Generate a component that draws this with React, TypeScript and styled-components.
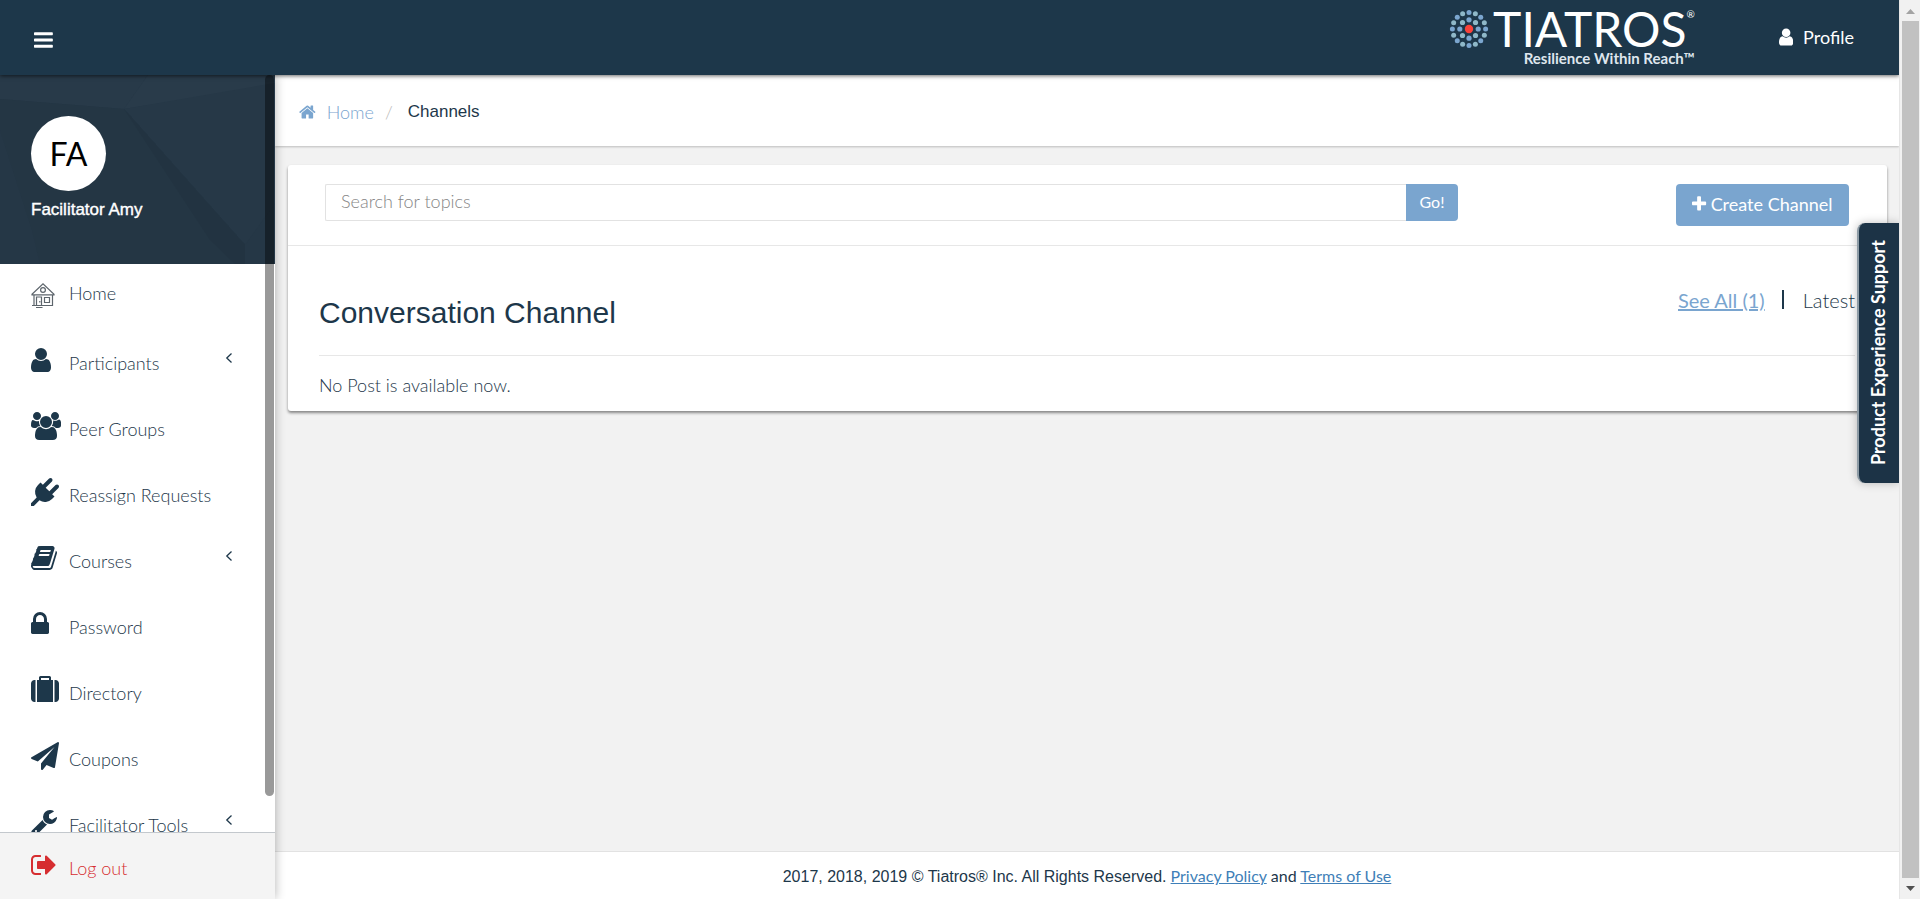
import React from "react";
import styled, { createGlobalStyle } from "styled-components";

const navy = "#1d374a";
const blue = "#7aa5cf";
const sans = `Lato, "Liberation Sans", sans-serif`;
const arial = `"Liberation Sans", Arial, sans-serif`;

const GlobalStyle = createGlobalStyle`
  * { box-sizing: border-box; }
  body { margin: 0; background: #f2f2f2; color: ${navy}; font-family: ${sans}; font-size: 18px; font-weight: 300; line-height: 24px; }
  button, input { font: inherit; }
`;

const Page = styled.div`
  display: flex;
  height: 100vh;
`;

const Site = styled.div`
  position: relative;
  flex: 1;
  min-width: 0;
  display: flex;
  flex-direction: column;
`;

const Header = styled.header`
  position: relative;
  z-index: 3;
  flex: none;
  height: 75px;
  padding: 0 45px 0 34px;
  display: flex;
  align-items: center;
  background: ${navy};
  box-shadow: 0 1px 4px rgba(0, 0, 0, 0.6);
`;

const MenuButton = styled.button`
  display: flex;
  margin: 4px auto 0 0;
  padding: 0;
  border: 0;
  background: none;
  color: #fff;
  cursor: pointer;
`;

const Logo = styled.a`
  display: flex;
  gap: 4px;
  align-self: flex-start;
  margin: 8px 84px 0 0;
  color: #fff;
  text-decoration: none;
`;

const LogoText = styled.span`
  display: flex;
  flex-direction: column;
  align-items: flex-end;
`;

const LogoName = styled.span`
  display: flex;
  align-items: flex-start;
  font-size: 48px;
  font-weight: 400;
  line-height: 42px;
`;

const Registered = styled.sup`
  font-size: 10px;
  line-height: 12px;
`;

const Tagline = styled.span`
  font-size: 15px;
  font-weight: 700;
  line-height: 16px;
  color: #dfe6ee;
  white-space: nowrap;
`;

const ProfileLink = styled.a`
  display: flex;
  align-items: center;
  gap: 10px;
  padding-bottom: 2px;
  color: #fff;
  font-weight: 400;
  text-decoration: none;
`;

const Body = styled.div`
  flex: 1;
  min-height: 0;
  display: flex;
`;

const Sidebar = styled.aside`
  position: relative;
  z-index: 2;
  flex: none;
  width: 275px;
  display: flex;
  flex-direction: column;
  background: #fff;
  box-shadow: 0 0 10px rgba(0, 0, 0, 0.3);
`;

const UserPanel = styled.section`
  position: relative;
  flex: none;
  height: 189px;
  padding: 41px 31px 0;
  background: #253746;
  color: #fff;
`;

const Facets = styled.svg`
  position: absolute;
  inset: 0;
  width: 100%;
  height: 100%;
`;

const Avatar = styled.div`
  position: relative;
  width: 75px;
  height: 75px;
  display: flex;
  align-items: center;
  justify-content: center;
  border-radius: 50%;
  background: #fff;
  color: #000;
  font-size: 32px;
  font-weight: 400;
`;

const UserName = styled.div`
  position: relative;
  margin-top: 7px;
  font-family: ${arial};
  font-size: 17px;
  font-weight: 400;
  -webkit-text-stroke: 0.4px #fff;
`;

const Nav = styled.nav`
  flex: 1;
  min-height: 0;
  overflow: hidden;
`;

const NavItem = styled.a<{ $raised?: boolean }>`
  display: flex;
  align-items: flex-start;
  height: 66px;
  padding: ${(p) => (p.$raised ? 17 : 16)}px 42px 0 31px;
  color: inherit;
  text-decoration: none;

  span {
    flex: 1;
    margin-top: ${(p) => (p.$raised ? 0 : 5)}px;
    white-space: nowrap;
  }
`;

const IconSlot = styled.i`
  flex: none;
  display: flex;
  width: 38px;
`;

const Chevron = styled.svg`
  margin-top: 6px;
`;

const LogOut = styled.a`
  display: flex;
  flex: none;
  height: 67px;
  padding: 18px 31px 0;
  border-top: 1px solid #c3c8cd;
  background: #f4f4f4;
  color: #d62d30;
  text-decoration: none;

  span { margin-top: 5px; }
`;

const SideThumb = styled.div`
  position: absolute;
  z-index: 1;
  top: 0;
  right: 1px;
  bottom: 103px;
  width: 9px;
  border-radius: 5px;
  background: rgba(0, 0, 0, 0.4);
`;

const Main = styled.main`
  flex: 1;
  min-width: 0;
  display: flex;
  flex-direction: column;
`;

const Breadcrumb = styled.nav`
  display: flex;
  align-items: center;
  height: 71px;
  padding: 3px 24px 0;
  background: #fff;
  box-shadow: 0 1px 2px rgba(0, 0, 0, 0.22);

  a {
    display: flex;
    align-items: center;
    gap: 11px;
    color: ${blue};
    text-decoration: none;
  }
`;

const Slash = styled.span`
  margin: 0 15px 0 11px;
  color: #bbb;
`;

const Current = styled.span`
  font-family: ${arial};
  font-size: 17px;
  font-weight: 400;
`;

const Card = styled.section`
  margin: 19px 12px 0 13px;
  border-radius: 3px;
  background: #fff;
  box-shadow: 0 2px 3px rgba(0, 0, 0, 0.45);
`;

const Toolbar = styled.div`
  display: flex;
  align-items: flex-start;
  gap: 218px;
  height: 81px;
  padding: 19px 38px 0 37px;
  border-bottom: 1px solid #e7e7e7;
`;

const SearchForm = styled.form`
  display: flex;
  flex: 1;
  height: 37px;
`;

const SearchInput = styled.input`
  flex: 1;
  min-width: 0;
  padding: 0 15px 3px;
  border: 1px solid #e2e2e2;
  border-right: 0;
  border-radius: 2px 0 0 2px;
  color: ${navy};
  outline: 0;

  &::placeholder { color: #858585; opacity: 1; }
`;

const Button = styled.button<{ $large?: boolean }>`
  flex: none;
  display: flex;
  align-items: center;
  justify-content: center;
  gap: 4px;
  width: ${(p) => (p.$large ? 173 : 52)}px;
  height: ${(p) => (p.$large ? 42 : 37)}px;
  padding: 0 0 2px;
  border: 0;
  border-radius: ${(p) => (p.$large ? "4px" : "0 4px 4px 0")};
  background: ${blue};
  color: #fff;
  font-size: ${(p) => (p.$large ? 18 : 16)}px;
  font-weight: 400;
  white-space: nowrap;
  cursor: pointer;
`;

const CardBody = styled.div`
  padding: 0 32px 14px 31px;
`;

const TitleRow = styled.div`
  display: flex;
  justify-content: space-between;
  height: 110px;
  border-bottom: 1px solid #e7e7e7;
`;

const Title = styled.h1`
  margin: 47px 0 0;
  font-family: ${arial};
  font-size: 30px;
  font-weight: 400;
  line-height: 40px;
`;

const Filters = styled.div`
  display: flex;
  margin-top: 42px;
  font-size: 20px;
  font-weight: 400;

  a { color: ${blue}; }
  span { font-weight: 300; }
`;

const Bar = styled.i`
  width: 2px;
  height: 19px;
  margin: 2px 19px 0 17px;
  background: ${navy};
`;

const Empty = styled.p`
  margin: 17px 0 0;
`;

const Footer = styled.footer`
  height: 48px;
  margin-top: auto;
  padding-top: 12px;
  border-top: 1px solid #e2e2e2;
  background: #fff;
  font-size: 16px;
  font-weight: 400;
  text-align: center;

  a { color: #3f7fb8; }
`;

const Legal = styled.span`
  font-family: ${arial};
`;

const SupportTab = styled.button`
  position: absolute;
  z-index: 4;
  top: 223px;
  right: 0;
  width: 42px;
  height: 260px;
  display: flex;
  align-items: center;
  justify-content: center;
  padding: 0 2px 0 0;
  border: 0;
  border-left: 2px solid #8d9ba5;
  border-radius: 8px 0 0 8px;
  background: #1c3346;
  box-shadow: 0 0 10px rgba(0, 0, 0, 0.25);
  color: #fff;
  font-size: 18px;
  font-weight: 700;
  cursor: pointer;

  span {
    writing-mode: vertical-rl;
    transform: rotate(180deg);
    white-space: nowrap;
  }
`;

const ScrollTrack = styled.div`
  z-index: 5;
  flex: none;
  width: 21px;
  display: flex;
  flex-direction: column;
  align-items: center;
  padding: 9px 2px 8px;
  border-left: 1px solid #e6e6e6;
  background: #f1f1f1;
`;

const ScrollThumb = styled.div`
  flex: 1;
  width: 17px;
  margin: 7px 0 8px;
  background: #c1c1c1;
`;

type Glyph = { x: number; w: number; d: string };

const glyphs: Record<string, Glyph> = {
  user: { x: 256, w: 1280, d: "M1536 1399q0 109-62.5 187t-150.5 78h-854q-88 0-150.5-78t-62.5-187q0-85 8.5-160.5t31.5-152 58.5-131 94-89 134.5-34.5q131 128 313 128t313-128q76 0 134.5 34.5t94 89 58.5 131 31.5 152 8.5 160.5zm-256-887q0 159-112.5 271.5t-271.5 112.5-271.5-112.5-112.5-271.5 112.5-271.5 271.5-112.5 271.5 112.5 112.5 271.5z" },
  users: { x: 0, w: 1920, d: "M593 896q-162 5-265 128h-134q-82 0-138-40.5t-56-118.5q0-353 124-353 6 0 43.5 21t97.5 42.5 119 21.5q67 0 133-23-5 37-5 66 0 159 93 293zm1071 637q0 120-73 189.5t-194 69.5h-874q-121 0-194-69.5t-73-189.5q0-53 3.5-103.5t14-109 26.5-108.5 43-97.5 62-81 85.5-53.5 111.5-20q10 0 43 21.5t73 48 107 48 135 21.5 135-21.5 107-48 73-48 43-21.5q61 0 111.5 20t85.5 53.5 62 81 43 97.5 26.5 108.5 14 109 3.5 103.5zm-1024-1277q0 106-75 181t-181 75-181-75-75-181 75-181 181-75 181 75 75 181zm704 384q0 159-112.5 271.5t-271.5 112.5-271.5-112.5-112.5-271.5 112.5-271.5 271.5-112.5 271.5 112.5 112.5 271.5zm576 225q0 78-56 118.5t-138 40.5h-134q-103-123-265-128 93-134 93-293 0-29-5-66 66 23 133 23 59 0 119-21.5t97.5-42.5 43.5-21q124 0 124 353zm-128-609q0 106-75 181t-181 75-181-75-75-181 75-181 181-75 181 75 75 181z" },
  plug: { x: 0, w: 1792, d: "M1755 453q37 38 37 90.5t-37 90.5l-401 400 150 150-160 160q-163 163-389.5 186.5t-411.5-100.5l-362 362h-181v-181l362-362q-124-185-100.5-411.5t186.5-389.5l160-160 150 150 400-401q38-37 91-37t90 37 37 90.5-37 90.5l-400 401 234 234 401-400q38-37 91-37t90 37z" },
  book: { x: 64, w: 1664, d: "M1703 478q40 57 18 129l-275 906q-19 64-76.5 107.5t-122.5 43.5h-923q-77 0-148.5-53.5t-99.5-131.5q-24-67-2-127 0-4 3-27t4-37q1-8-3-21.5t-3-19.5q2-11 8-21t16.5-23.5 16.5-23.5q23-38 45-91.5t30-91.5q3-10 .5-30t-.5-28q3-11 17-28t17-23q21-36 42-92t25-90q1-9-2.5-32t.5-28q4-13 22-30.5t22-22.5q19-26 42.5-84.5t27.5-96.5q1-8-3-25.5t-2-26.5q2-8 9-18t18-23 17-21q8-12 16.5-30.5t15-35 16-36 19.5-32 26.5-23.5 36-11.5 47.5 5.5l-1 3q38-9 51-9h761q74 0 114 56t18 130l-274 906q-36 119-71.5 153.5t-128.5 34.5h-869q-27 0-38 15-11 16-1 43 24 70 144 70h923q29 0 56-15.5t35-41.5l300-987q7-22 5-57 38 15 59 43zm-1064 2q-4 13 2 22.5t20 9.5h608q13 0 25.5-9.5t16.5-22.5l21-64q4-13-2-22.5t-20-9.5h-608q-13 0-25.5 9.5t-16.5 22.5zm-83 256q-4 13 2 22.5t20 9.5h608q13 0 25.5-9.5t16.5-22.5l21-64q4-13-2-22.5t-20-9.5h-608q-13 0-25.5 9.5t-16.5 22.5z" },
  lock: { x: 320, w: 1152, d: "M640 768h512v-192q0-106-75-181t-181-75-181 75-75 181v192zm832 96v576q0 40-28 68t-68 28h-960q-40 0-68-28t-28-68v-576q0-40 28-68t68-28h32v-192q0-184 132-316t316-132 316 132 132 316v192h32q40 0 68 28t28 68z" },
  suitcase: { x: 0, w: 1792, d: "M640 256h512v-128h-512v128zm-352 0v1408h-64q-92 0-158-66t-66-158v-960q0-92 66-158t158-66h64zm1120 0v1408h-1024v-1408h128v-160q0-40 28-68t68-28h576q40 0 68 28t28 68v160h128zm384 224v960q0 92-66 158t-158 66h-64v-1408h64q92 0 158 66t66 158z" },
  plane: { x: 0, w: 1792, d: "M1764 11q33 24 27 64l-256 1536q-5 29-32 45-14 8-31 8-11 0-24-5l-453-185-242 295q-18 23-49 23-13 0-22-4-19-7-30.5-23.5t-11.5-36.5v-349l864-1059-1069 925-395-162q-37-14-40-55-2-40 32-59l1664-960q15-9 32-9 20 0 36 11z" },
  wrench: { x: 64, w: 1664, d: "M448 1472q0-26-19-45t-45-19-45 19-19 45 19 45 45 19 45-19 19-45zm644-420l-682 682q-37 37-90 37-52 0-91-37l-106-108q-38-36-38-90 0-53 38-91l681-681q39 98 114.5 173.5t173.5 114.5zm634-435q0 39-23 106-47 134-164.5 217.5t-258.5 83.5q-185 0-316.5-131.5t-131.5-316.5 131.5-316.5 316.5-131.5q58 0 121.5 16.5t107.5 46.5q16 11 16 28t-16 28l-293 169v224l193 107q5-3 79-48.5t135.5-81 70.5-35.5q15 0 23.5 10t8.5 25z" },
  signOut: { x: 64, w: 1600, d: "M704 1440q0 4 1 20t.5 26.5-3 23.5-10 19.5-20.5 6.5h-320q-119 0-203.5-84.5t-84.5-203.5v-704q0-119 84.5-203.5t203.5-84.5h320q13 0 22.5 9.5t9.5 22.5q0 4 1 20t.5 26.5-3 23.5-10 19.5-20.5 6.5h-320q-66 0-113 47t-47 113v704q0 66 47 113t113 47h312l11.5 1 11.5 3 8 5.5 7 9 2 13.5zm928-544q0 26-19 45l-544 544q-19 19-45 19t-45-19-19-45v-288h-448q-26 0-45-19t-19-45v-384q0-26 19-45t45-19h448v-288q0-26 19-45t45-19 45 19l544 544q19 19 19 45z" },
  home: { x: 64, w: 1664, d: "M1472 992v480q0 26-19 45t-45 19h-384v-384h-256v384h-384q-26 0-45-19t-19-45v-480q0-1 .5-3t.5-3l575-474 575 474q1 2 1 6zm223-69l-62 74q-8 9-21 11h-3q-13 0-21-7l-692-577-692 577q-12 8-24 7-13-2-21-11l-62-74q-8-10-7-23.5t11-21.5l719-599q32-26 76-26t76 26l244 204v-195q0-14 9-23t23-9h192q14 0 23 9t9 23v408l219 182q10 8 11 21.5t-7 23.5z" },
  plus: { x: 192, w: 1408, d: "M1600 736v192q0 40-28 68t-68 28h-416v416q0 40-28 68t-68 28h-192q-40 0-68-28t-28-68v-416h-416q-40 0-68-28t-28-68v-192q0-40 28-68t68-28h416v-416q0-40 28-68t68-28h192q40 0 68 28t28 68v416h416q40 0 68 28t28 68z" },
  bars: { x: 128, w: 1536, d: "M1664 1344v128q0 26-19 45t-45 19h-1408q-26 0-45-19t-19-45v-128q0-26 19-45t45-19h1408q26 0 45 19t19 45zm0-512v128q0 26-19 45t-45 19h-1408q-26 0-45-19t-19-45v-128q0-26 19-45t45-19h1408q26 0 45 19t19 45zm0-512v128q0 26-19 45t-45 19h-1408q-26 0-45-19t-19-45v-128q0-26 19-45t45-19h1408q26 0 45 19t19 45z" },
};

function Icon({ name, size = 28 }: { name: string; size?: number }) {
  const g = glyphs[name];
  return (
    <svg width={(g.w / 1792) * size} height={size} viewBox={`${g.x} 0 ${g.w} 1792`} fill="currentColor" aria-hidden="true">
      <path d={g.d} />
    </svg>
  );
}

function HouseIcon() {
  return (
    <svg width="24" height="28" viewBox="0 -1 24 28" fill="none" stroke="#5d656c" strokeWidth="1.2" aria-hidden="true">
      <path d="M1 12.3 12 1.8l11 10.5v.5H1zM3 13v10.5h18.500V13" />
      <path d="M1 23.500h21" strokeWidth="1" />
      <circle cx="12" cy="8" r="2.400" />
      <path d="M5.500 23.500v-8.500h5v8.500M13.500 15.500h5v5h-5zM8.800 19v1.500M5 25.500h6.500" />
    </svg>
  );
}

function LogoMark() {
  const ring = (count: number, radius: number, dot: number) =>
    Array.from({ length: count }, (_, i) => {
      const a = (i * 2 * Math.PI) / count;
      return (
        <circle
          key={`${count}-${i}`}
          cx={20 + radius * Math.sin(a)}
          cy={20 - radius * Math.cos(a)}
          r={dot}
          fill={(count === 8 ? i % 2 : i % 4 === 1 || i % 4 === 3) ? "#8fb8c8" : "#7ba6cf"}
        />
      );
    });
  return (
    <svg width="40" height="42" viewBox="0 -1 40 42" aria-hidden="true">
      {ring(16, 16.6, 2.5)}
      {ring(8, 9.2, 2.6)}
      <circle cx="20" cy="20" r="4.2" fill="#f9423a" />
    </svg>
  );
}

const items = [
  { icon: "user", label: "Participants", more: true },
  { icon: "users", label: "Peer Groups" },
  { icon: "plug", label: "Reassign Requests" },
  { icon: "book", label: "Courses", more: true },
  { icon: "lock", label: "Password" },
  { icon: "suitcase", label: "Directory" },
  { icon: "plane", label: "Coupons" },
  { icon: "wrench", label: "Facilitator Tools", more: true },
];

export default function App() {
  return (
    <Page>
      <GlobalStyle />
      <Site>
        <Header>
          <MenuButton type="button" aria-label="Toggle menu"><Icon name="bars" size={22} /></MenuButton>
          <Logo href="#">
            <LogoMark />
            <LogoText>
              <LogoName>TIATROS<Registered>®</Registered></LogoName>
              <Tagline>Resilience Within Reach™</Tagline>
            </LogoText>
          </Logo>
          <ProfileLink href="#"><Icon name="user" size={20} />Profile</ProfileLink>
        </Header>
        <Body>
          <Sidebar>
            <UserPanel>
              <Facets viewBox="0 0 275 189" preserveAspectRatio="none" aria-hidden="true">
                <path d="M0 0h148l-24 34L0 24z" fill="#283a49" />
                <path d="M148 0h127v10L124 34z" fill="#293b4a" />
                <path d="M124 34 275 8v120l-30 42z" fill="#263847" />
                <path d="M0 24l124 10 121 136-10 19H40L0 60z" fill="#243644" />
                <path d="M0 55l32 100 8 34H0z" fill="#253746" />
                <path d="M124 34 245 170v19h-10L210 165z" fill="#223341" />
              </Facets>
              <Avatar>FA</Avatar>
              <UserName>Facilitator Amy</UserName>
            </UserPanel>
            <Nav aria-label="Main">
              <NavItem href="#" $raised><IconSlot><HouseIcon /></IconSlot><span>Home</span></NavItem>
              {items.map((item) => (
                <NavItem href="#" key={item.label}>
                  <IconSlot><Icon name={item.icon} /></IconSlot>
                  <span>{item.label}</span>
                  {item.more && (
                    <Chevron width="8" height="12" viewBox="0 0 8 12" fill="none" stroke={navy} strokeWidth="1.3">
                      <path d="M6.500 1.500 1.800 6l4.700 4.500" />
                    </Chevron>
                  )}
                </NavItem>
              ))}
            </Nav>
            <LogOut href="#"><IconSlot><Icon name="signOut" /></IconSlot><span>Log out</span></LogOut>
            <SideThumb />
          </Sidebar>
          <Main>
            <Breadcrumb aria-label="Breadcrumb">
              <a href="#"><Icon name="home" size={18} />Home</a>
              <Slash>/</Slash>
              <Current>Channels</Current>
            </Breadcrumb>
            <Card>
              <Toolbar>
                <SearchForm>
                  <SearchInput type="text" placeholder="Search for topics" aria-label="Search for topics" />
                  <Button type="button">Go!</Button>
                </SearchForm>
                <Button type="button" $large><Icon name="plus" size={18} />Create Channel</Button>
              </Toolbar>
              <CardBody>
                <TitleRow>
                  <Title>Conversation Channel</Title>
                  <Filters><a href="#">See All (1)</a><Bar /><span>Latest</span></Filters>
                </TitleRow>
                <Empty>No Post is available now.</Empty>
              </CardBody>
            </Card>
            <Footer>
              <Legal>2017, 2018, 2019 © Tiatros® Inc. All Rights Reserved.</Legal>{" "}
              <a href="#">Privacy Policy</a> and <a href="#">Terms of Use</a>
            </Footer>
          </Main>
        </Body>
        <SupportTab type="button"><span>Product Experience Support</span></SupportTab>
      </Site>
      <ScrollTrack aria-hidden="true">
        <svg width="9" height="5" viewBox="0 0 9 5" fill="#a3a3a3"><path d="M0 5 4.500 0 9 5z" /></svg>
        <ScrollThumb />
        <svg width="9" height="5" viewBox="0 0 9 5" fill="#505050"><path d="M0 0h9L4.500 5z" /></svg>
      </ScrollTrack>
    </Page>
  );
}
